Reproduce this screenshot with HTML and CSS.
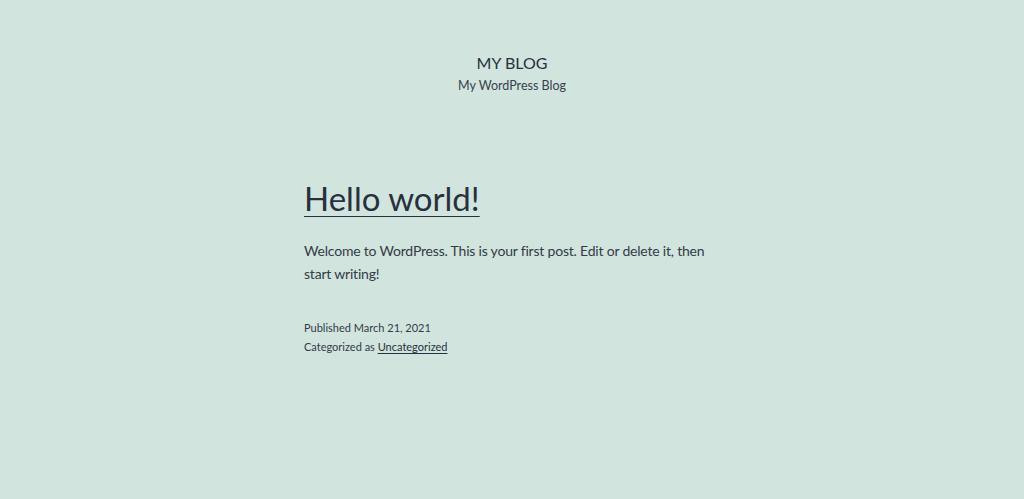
FILE: index.html
```html
<!DOCTYPE html>
<html lang="en">
<head>
<meta charset="utf-8">
<title>My Blog</title>
<link rel="stylesheet" href="styles.css">
</head>
<body>
<header class="site-header">
  <p class="site-title">MY BLOG</p>
  <p class="site-description">My WordPress Blog</p>
</header>
<main class="site-main">
  <article class="post">
    <h1 class="entry-title"><a href="#">Hello world!</a></h1>
    <div class="entry-content">
      <p>Welcome to WordPress. This is your first post. Edit or delete it, then start writing!</p>
    </div>
    <footer class="entry-footer">
      <p>Published March 21, 2021</p>
      <p>Categorized as <a href="#">Uncategorized</a></p>
    </footer>
  </article>
</main>
</body>
</html>
```
FILE: styles.css
```css
html, body {
  margin: 0;
  padding: 0;
}
body {
  background: #d1e4dd;
  color: #28303d;
  font-family: Lato, "Open Sans", sans-serif;
  height: 499px;
  overflow: hidden;
}
a {
  color: #28303d;
}
.site-header {
  display: flex;
  flex-direction: column;
  align-items: center;
  padding-top: 52px;
}
.site-title {
  margin: 0;
  font-size: 16px;
  line-height: 22px;
}
.site-description {
  margin: 3px 0 0;
  font-size: 12.5px;
  line-height: 18px;
  color: #39414d;
}
.site-main {
  width: 416px;
  margin: 0 auto;
  padding-top: 83px;
}
.entry-title {
  margin: 0;
  font-weight: 400;
  font-size: 33px;
  line-height: 40px;
}
.entry-title a {
  text-decoration: underline;
  text-decoration-thickness: 1px;
  text-underline-offset: 5px;
}
.entry-content {
  margin-top: 21px;
}
.entry-content p {
  margin: 0;
  font-size: 14px;
  letter-spacing: -0.2px;
  line-height: 23px;
  color: #333b47;
}
.entry-footer {
  margin-top: 33px;
}
.entry-footer p {
  margin: 0;
  font-size: 11px;
  line-height: 19px;
  color: #333b47;
}
.entry-footer a {
  text-underline-offset: 2px;
}
```
